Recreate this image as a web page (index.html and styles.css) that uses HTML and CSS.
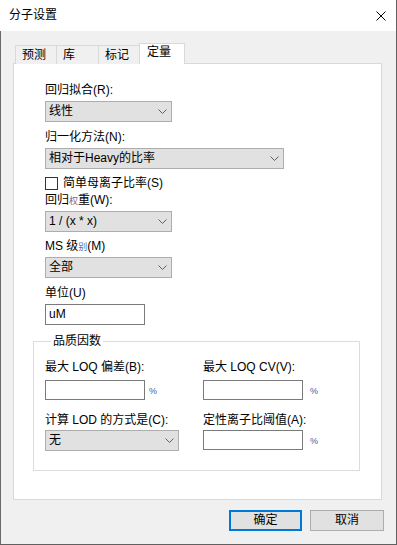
FILE: index.html
```html
<!DOCTYPE html>
<html lang="zh-CN">
<head>
<meta charset="utf-8">
<title>分子设置</title>
<link rel="stylesheet" href="styles.css">
</head>
<body>
<div class="window">
  <div class="titlebar">
    <span class="title">分子设置</span>
    <svg class="close" width="10" height="10" viewBox="0 0 10 10"><path d="M0.5 0.5 L9.5 9.5 M9.5 0.5 L0.5 9.5" stroke="#000" stroke-width="1" fill="none"/></svg>
  </div>
  <div class="content">
    <div class="tabs">
      <div class="tab t1">预测</div>
      <div class="tab t2">库</div>
      <div class="tab t3">标记</div>
      <div class="tab active">定量</div>
    </div>
    <div class="panel">
      <div class="field f1">
        <div class="label">回归拟合(R):</div>
        <div class="select w127"><span>线性</span><svg class="chev" width="9" height="5" viewBox="0 0 9 5"><path d="M0.5 0.5 L4.5 4.5 L8.5 0.5" stroke="#606060" fill="none"/></svg></div>
      </div>
      <div class="field f2">
        <div class="label">归一化方法(N):</div>
        <div class="select w239"><span>相对于Heavy的比率</span><svg class="chev" width="9" height="5" viewBox="0 0 9 5"><path d="M0.5 0.5 L4.5 4.5 L8.5 0.5" stroke="#606060" fill="none"/></svg></div>
      </div>
      <div class="checkrow">
        <span class="checkbox"></span>
        <span class="checklabel">简单母离子比率(S)</span>
      </div>
      <div class="field f3">
        <div class="label">回归<span class="fb fb1">权</span>重(W):</div>
        <div class="select w127"><span>1 / (x * x)</span><svg class="chev" width="9" height="5" viewBox="0 0 9 5"><path d="M0.5 0.5 L4.5 4.5 L8.5 0.5" stroke="#606060" fill="none"/></svg></div>
      </div>
      <div class="field f4">
        <div class="label">MS 级<span class="fb fb2">别</span>(M)</div>
        <div class="select w127"><span>全部</span><svg class="chev" width="9" height="5" viewBox="0 0 9 5"><path d="M0.5 0.5 L4.5 4.5 L8.5 0.5" stroke="#606060" fill="none"/></svg></div>
      </div>
      <div class="field f5">
        <div class="label">单位(U)</div>
        <div class="input w100 unit">uM</div>
      </div>
      <div class="group">
        <div class="group-title">品质因数</div>
        <div class="grid">
          <div class="cell r1">
            <div class="label lb1">最大 LOQ 偏差(B):</div>
            <div class="inline"><div class="input w100 gi"></div><span class="pct p1">%</span></div>
          </div>
          <div class="cell r1">
            <div class="label lb1">最大 LOQ CV(V):</div>
            <div class="inline"><div class="input w100 gi"></div><span class="pct p2">%</span></div>
          </div>
          <div class="cell r2">
            <div class="label lb2">计算 LOD 的方式是(C):</div>
            <div class="select w134"><span>无</span><svg class="chev" width="9" height="5" viewBox="0 0 9 5"><path d="M0.5 0.5 L4.5 4.5 L8.5 0.5" stroke="#606060" fill="none"/></svg></div>
          </div>
          <div class="cell r2">
            <div class="label lb2">定性离子比阈值(A):</div>
            <div class="inline"><div class="input w100 gi"></div><span class="pct p2">%</span></div>
          </div>
        </div>
      </div>
    </div>
    <div class="buttons">
      <div class="btn ok">确定</div>
      <div class="btn cancel">取消</div>
    </div>
  </div>
</div>
</body>
</html>
```

FILE: styles.css
```css
* { box-sizing: border-box; }
html, body { margin: 0; padding: 0; }
body {
  width: 397px;
  height: 545px;
  overflow: hidden;
  font-family: "Liberation Sans", "Noto Sans CJK SC", sans-serif;
  font-size: 12px;
  color: #000;
  background: #f0f0f0;
}
.window {
  width: 397px;
  height: 545px;
  border-right: 1px solid #606060;
  border-bottom: 1px solid #606060;
  display: flex;
  flex-direction: column;
  background: #f0f0f0;
}
.titlebar {
  height: 31px;
  flex: none;
  background: #fff;
  display: flex;
  align-items: center;
  justify-content: space-between;
  padding: 0 10px 0 9px;
  line-height: 15px;
}
.close { display: block; }
.content {
  flex: 1;
  border-left: 1px solid #6a6a6a;
  padding: 12px 12px 0 12px;
}
.tabs {
  display: flex;
  align-items: flex-end;
  height: 21px;
  margin: 0 0 -1px 2px;
}
.tab {
  height: 19px;
  border-left: 1px solid #d9d9d9;
  border-top: 1px solid #d9d9d9;
  padding: 2px 0 0 6px;
  line-height: 15px;
  background: #f0f0f0;
}
.t1 { width: 41px; }
.t2 { width: 42px; }
.t3 { width: 41px; }
.tab.active {
  height: 21px;
  width: 46px;
  border: 1px solid #d9d9d9;
  border-bottom: none;
  background: #fff;
  padding: 1px 0 0 7px;
  position: relative;
  z-index: 1;
}
.panel {
  width: 369px;
  height: 437px;
  border: 1px solid #d9d9d9;
  background: #fff;
  padding: 19px 0 0 31px;
}
.label {
  line-height: 15px;
  height: 15px;
  margin-bottom: 3px;
  white-space: nowrap;
}
.fb { font-size: 9px; }
.fb1 { color: #7d5f8c; }
.fb2 { color: #4f73b0; }
.select {
  height: 21px;
  border: 1px solid #adadad;
  background: #e1e1e1;
  display: flex;
  align-items: center;
  justify-content: space-between;
  padding: 0 4px 0 3px;
  line-height: 15px;
  white-space: nowrap;
}
.chev { display: block; flex: none; }
.w127 { width: 127px; }
.w239 { width: 239px; }
.w134 { width: 134px; }
.w100 { width: 100px; }
.input {
  height: 21px;
  border: 1px solid #7a7a7a;
  background: #fff;
  padding: 0 3px;
  line-height: 19px;
}
.input.gi { height: 20px; }
.f2 { margin-top: 8px; }
.checkrow {
  margin-top: 7px;
  height: 15px;
  display: flex;
  align-items: center;
  line-height: 15px;
}
.checkbox {
  width: 13px;
  height: 13px;
  border: 1px solid #333;
  background: #fff;
  margin-right: 5px;
}
.f3 { margin-top: 2px; }
.f4 { margin-top: 7px; }
.f5 { margin-top: 8px; }
.group {
  margin: 16px 0 0 -12px;
  width: 327px;
  height: 130px;
  border: 1px solid #dcdcdc;
  padding: 0 0 0 11px;
}
.group-title {
  width: fit-content;
  margin: -8px 0 0 6px;
  padding: 0 2px;
  background: #fff;
  line-height: 15px;
}
.grid {
  display: grid;
  grid-template-columns: 158px auto;
  margin-top: 11px;
}
.r2 { margin-top: 13px; }
.lb1 { margin-bottom: 5px; }
.lb2 { margin-bottom: 2px; }
.inline {
  display: flex;
  align-items: center;
}
.pct {
  font-size: 9px;
  color: #3a64a8;
  line-height: 10px;
  padding-top: 2px;
}
.p1 { margin-left: 4px; }
.p2 { margin-left: 7px; }
.buttons {
  margin-top: 10px;
  display: flex;
  justify-content: flex-end;
  gap: 8px;
}
.btn {
  height: 21px;
  display: flex;
  align-items: center;
  justify-content: center;
  background: #e1e1e1;
  line-height: 15px;
}
.ok { width: 73px; border: 2px solid #0078d7; }
.cancel { width: 74px; border: 1px solid #adadad; }
```
